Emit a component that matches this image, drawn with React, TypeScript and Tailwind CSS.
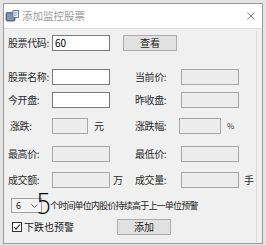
import React from 'react';

const label = 'text-[10px] leading-none tracking-[-0.4px] text-[#2a2a2a] whitespace-nowrap';
const editBox = 'h-[16px] border border-[#7a7a7a] bg-white';
const roBox = 'h-[16px] border border-[#a8a8a8] bg-[#ececec]';

function Field({ text, w = 'w-[44px]' }: { text: string; w?: string }) {
  return <div className={`${label} ${w} shrink-0`}>{text}</div>;
}

function AppIcon() {
  return (
    <svg width="14" height="12" viewBox="0 0 14 12">
      <rect x="0.5" y="2" width="10" height="9.5" rx="2" fill="#5b6f8f" />
      <rect x="2" y="3.5" width="7" height="6.5" rx="1" fill="#7d92b3" />
      <rect x="8" y="0.5" width="5.5" height="7" fill="#f4f6fa" stroke="#6a7fa2" />
      <path d="M9 2.5h3.5M9 4h3.5M9 5.5h2.5" stroke="#8fa0bd" strokeWidth="0.8" />
    </svg>
  );
}

export default function App() {
  return (
    <div className="w-[266px] h-[245px] bg-[#e4e4e4] pt-[3px] pl-[3px] overflow-hidden font-['Noto_Sans_CJK_SC','Microsoft_YaHei',sans-serif]">
      <div className="w-[260px] h-[241px] border border-[#9a9a9a] bg-[#f0f0f0] flex flex-col">
        {/* title bar */}
        <div className="h-[24px] bg-white flex items-center pl-[1px] pr-[7px] shrink-0">
          <AppIcon />
          <span className="ml-[3px] text-[10.5px] leading-none text-[#9c9c9c]">添加监控股票</span>
          <svg className="ml-auto" width="8" height="8" viewBox="0 0 8 8">
            <path d="M0.5 0.5l7 7M7.5 0.5l-7 7" stroke="#8c8c8c" strokeWidth="1" />
          </svg>
        </div>

        <div className="relative flex-1 border-t border-[#dcdcdc] pl-[4px] flex flex-col">
          <div className="absolute right-[5px] top-[2px] bottom-0 border-l border-[#dadada]" />

          {/* 代码 */}
          <div className="flex items-center mt-[6px]">
            <Field text="股票代码:" />
            <div className={`${editBox} w-[58px] flex items-center pl-[2px] text-[10px] leading-none text-black`}>60</div>
            <button className="ml-[13px] w-[54px] h-[16px] border border-[#adadad] bg-[#e1e1e1] text-[10px] leading-none text-[#222]">查看</button>
          </div>

          <div className="flex items-center mt-[18px]">
            <Field text="股票名称:" />
            <div className={`${editBox} w-[58px]`} />
            <Field text="当前价:" w="w-[71px] pl-[25px]" />
            <div className={`${roBox} w-[58px]`} />
          </div>

          <div className="flex items-center mt-[7px]">
            <Field text="今开盘:" />
            <div className={`${editBox} w-[58px]`} />
            <Field text="昨收盘:" w="w-[71px] pl-[25px]" />
            <div className={`${roBox} w-[58px]`} />
          </div>

          <div className="flex items-center mt-[10px]">
            <Field text="涨跌:" w="w-[44px] pl-[2px]" />
            <div className={`${roBox} w-[36px]`} />
            <div className={`${label} w-[47px] pl-[6px]`}>元</div>
            <Field text="涨跌幅:" w="w-[44px]" />
            <div className={`${roBox} w-[42px]`} />
            <div className="pl-[6px] text-[8px] leading-none text-[#333]">%</div>
          </div>

          <div className="flex items-center mt-[12px]">
            <Field text="最高价:" />
            <div className={`${roBox} w-[58px]`} />
            <Field text="最低价:" w="w-[71px] pl-[25px]" />
            <div className={`${roBox} w-[58px]`} />
          </div>

          <div className="flex items-center mt-[10px]">
            <Field text="成交额:" />
            <div className={`${roBox} w-[58px]`} />
            <div className={`${label} w-[25px] pl-[3px]`}>万</div>
            <Field text="成交量:" w="w-[46px]" />
            <div className={`${roBox} w-[58px]`} />
            <div className={`${label} pl-[5px]`}>手</div>
          </div>

          {/* bottom */}
          <div className="relative flex items-center mt-[10px] pl-[3px]">
            <div className="w-[31px] h-[15px] border border-[#a0a0a0] bg-[#f4f4f4] flex items-center pl-[4px] pr-[3px] shrink-0">
              <span className="text-[9px] leading-none text-[#222]">6</span>
              <svg className="ml-auto" width="7" height="4" viewBox="0 0 7 4">
                <path d="M0.5 0.5l3 3 3-3" fill="none" stroke="#555" strokeWidth="1" />
              </svg>
            </div>
            <span className="ml-[8px] text-[9px] leading-none tracking-[-0.8px] text-[#222] whitespace-nowrap">个时间单位内股价持续高于上一单位预警</span>
            <span className="absolute left-[27px] top-[-7px] text-[28px] leading-none text-black font-['DejaVu_Sans',sans-serif] font-extralight scale-x-90">5</span>
          </div>

          <div className="flex items-center mt-[6px] pl-[4px]">
            <div className="w-[10px] h-[10px] border border-[#333] bg-white flex items-center justify-center shrink-0">
              <svg width="8" height="8" viewBox="0 0 8 8">
                <path d="M1 4l2 2.2L7 1.5" fill="none" stroke="#222" strokeWidth="1.1" />
              </svg>
            </div>
            <span className="ml-[2px] text-[10px] leading-none text-[#222]">下跌也预警</span>
            <button className="ml-[43px] w-[54px] h-[16px] border border-[#adadad] bg-[#e1e1e1] text-[10px] leading-none text-[#222]">添加</button>
          </div>
        </div>
      </div>
    </div>
  );
}
